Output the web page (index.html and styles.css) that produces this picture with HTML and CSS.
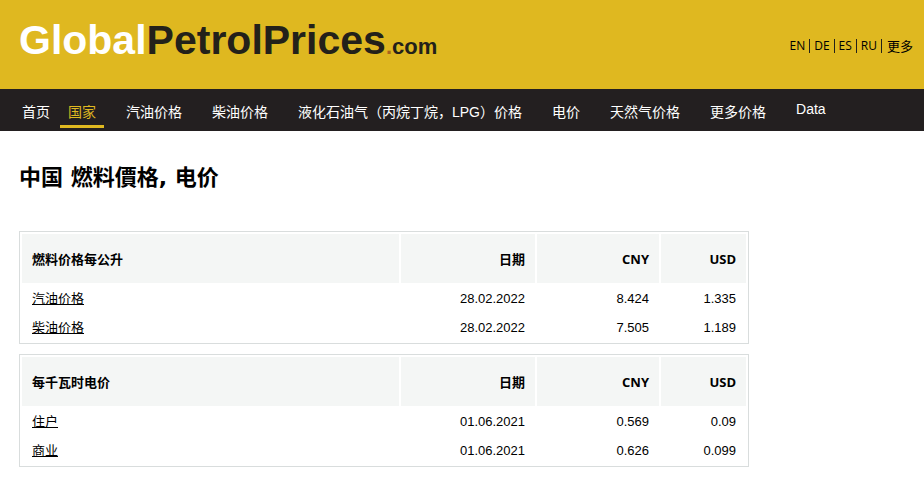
FILE: index.html
```html
<!DOCTYPE html>
<html lang="zh-CN">
<head>
<meta charset="utf-8">
<title>中国 燃料價格, 电价</title>
<link rel="stylesheet" href="styles.css">
</head>
<body>
<header class="header">
  <a class="logo" href="#"><span class="logo-light">Global</span>PetrolPrices<span class="logo-dot">.</span><span class="logo-suffix">com</span></a>
  <nav class="languages">
    <a href="#">EN</a><a href="#">DE</a><a href="#">ES</a><a href="#">RU</a><a class="more" href="#">更多</a>
  </nav>
</header>
<nav class="menu">
  <a class="home" href="#">首页</a>
  <a class="active" href="#">国家</a>
  <a href="#">汽油价格</a>
  <a href="#">柴油价格</a>
  <a href="#">液化石油气（丙烷丁烷，LPG）价格</a>
  <a href="#">电价</a>
  <a href="#">天然气价格</a>
  <a href="#">更多价格</a>
  <a class="latin" href="#">Data</a>
</nav>
<main class="content">
  <h1>中国 燃料價格, 电价</h1>
  <table class="prices">
    <colgroup><col><col class="date"><col class="cny"><col class="usd"></colgroup>
    <thead>
      <tr><th>燃料价格每公升</th><th>日期</th><th>CNY</th><th>USD</th></tr>
    </thead>
    <tbody>
      <tr><td><a href="#">汽油价格</a></td><td>28.02.2022</td><td>8.424</td><td>1.335</td></tr>
      <tr><td><a href="#">柴油价格</a></td><td>28.02.2022</td><td>7.505</td><td>1.189</td></tr>
    </tbody>
  </table>
  <table class="prices">
    <colgroup><col><col class="date"><col class="cny"><col class="usd"></colgroup>
    <thead>
      <tr><th>每千瓦时电价</th><th>日期</th><th>CNY</th><th>USD</th></tr>
    </thead>
    <tbody>
      <tr><td><a href="#">住户</a></td><td>01.06.2021</td><td>0.569</td><td>0.09</td></tr>
      <tr><td><a href="#">商业</a></td><td>01.06.2021</td><td>0.626</td><td>0.099</td></tr>
    </tbody>
  </table>
</main>
</body>
</html>
```
FILE: styles.css
```css
* {
  box-sizing: border-box;
}

body {
  margin: 0;
  background: #fff;
  color: #000;
  font-family: "Liberation Sans", "Noto Sans CJK SC", sans-serif;
  font-size: 13px;
}

a {
  color: inherit;
}

.header {
  display: flex;
  align-items: center;
  justify-content: space-between;
  padding: 16px 11px 25px 19px;
  background: #dfb820;
}

.logo {
  color: #23211a;
  font-size: 41px;
  font-weight: bold;
  line-height: 48px;
  text-decoration: none;
  white-space: nowrap;
}

.logo-light {
  color: #fff;
}

.logo-dot,
.logo-suffix {
  font-size: 22px;
  line-height: 24px;
}

.logo-dot {
  color: #a8641c;
}

.languages {
  display: flex;
  align-items: center;
  padding-top: 12px;
  font-family: "Open Sans", "Noto Sans CJK SC", sans-serif;
  font-size: 12px;
  line-height: 14px;
}

.languages a {
  padding: 0 4px;
  border-left: 1px solid #23211a;
  text-decoration: none;
}

.languages a:first-child {
  border-left: 0;
}

.languages .more {
  padding: 0 0 0 5px;
  font-size: 13px;
}

.menu {
  display: flex;
  align-items: flex-start;
  gap: 14px;
  padding: 11px 14px 3px;
  background: #231f20;
  color: #fff;
  font-size: 14px;
  line-height: 24px;
}

.menu a {
  padding: 0 8px 1px;
  border-bottom: 3px solid transparent;
  text-decoration: none;
  white-space: nowrap;
}

.menu .home {
  margin-right: -12px;
}

.menu .active {
  border-color: #dfb820;
  color: #dfb820;
}

.menu .latin {
  line-height: 18px;
}

.content {
  padding: 32px 19px;
}

h1 {
  margin: 0 0 38px;
  font-family: "DejaVu Sans", "Noto Sans CJK SC", sans-serif;
  font-size: 22px;
  font-weight: bold;
  line-height: 30px;
}

.prices {
  width: 100%;
  max-width: 730px;
  margin-bottom: 10px;
  border: 1px solid #d9dddd;
  border-spacing: 2px;
  table-layout: fixed;
}

.date {
  width: 134px;
}

.cny {
  width: 122px;
}

.usd {
  width: 85px;
}

.prices th,
.prices td {
  height: 27px;
  padding: 0 10px;
  line-height: 20px;
  text-align: right;
}

.prices th {
  height: 49px;
  background: #f4f6f5;
  font-family: "Open Sans", "Noto Sans CJK SC", sans-serif;
}

.prices th:first-child,
.prices td:first-child {
  text-align: left;
}
```
